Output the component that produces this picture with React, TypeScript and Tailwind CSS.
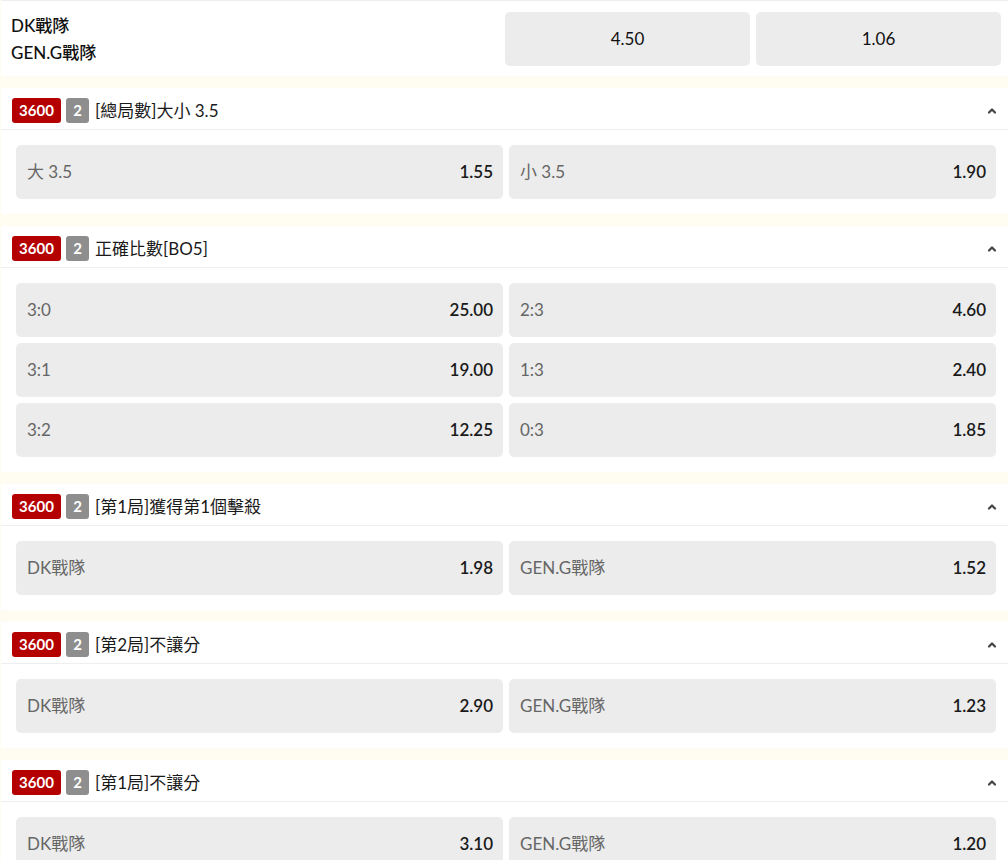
import { ChevronUp } from "lucide-react";

type Opt = { label: string; odds: string };
type Market = { title: string; opts: Opt[] };

const MARKETS: Market[] = [
  { title: "[總局數]大小 3.5", opts: [{ label: "大 3.5", odds: "1.55" }, { label: "小 3.5", odds: "1.90" }] },
  {
    title: "正確比數[BO5]",
    opts: [
      { label: "3:0", odds: "25.00" },
      { label: "2:3", odds: "4.60" },
      { label: "3:1", odds: "19.00" },
      { label: "1:3", odds: "2.40" },
      { label: "3:2", odds: "12.25" },
      { label: "0:3", odds: "1.85" },
    ],
  },
  { title: "[第1局]獲得第1個擊殺", opts: [{ label: "DK戰隊", odds: "1.98" }, { label: "GEN.G戰隊", odds: "1.52" }] },
  { title: "[第2局]不讓分", opts: [{ label: "DK戰隊", odds: "2.90" }, { label: "GEN.G戰隊", odds: "1.23" }] },
  { title: "[第1局]不讓分", opts: [{ label: "DK戰隊", odds: "3.10" }, { label: "GEN.G戰隊", odds: "1.20" }] },
];

function MarketCard({ m }: { m: Market }) {
  return (
    <section className="bg-white">
      <header className="flex h-[42px] items-center border-b border-[#eeeeee] pl-[11px] pr-[10px] pt-[4px]">
        <span className="flex h-[25px] w-[49px] items-center justify-center rounded-[3px] bg-[#b50000] text-[15px] font-bold text-white">
          3600
        </span>
        <span className="ml-[5px] flex h-[25px] w-[23px] items-center justify-center rounded-[3px] bg-[#8e8e8e] text-[15px] font-bold text-white">
          2
        </span>
        <span className="ml-[6px] text-[17px] text-[#1a1a1a]">{m.title}</span>
        <ChevronUp className="ml-auto h-[12px] w-[12px] text-[#444]" strokeWidth={4.5} />
      </header>
      <div className="grid grid-cols-2 gap-[6px] pb-[15px] pl-[15px] pr-[12px] pt-[15px]">
        {m.opts.map((o, i) => (
          <div
            key={i}
            className="flex h-[54px] items-center justify-between rounded-[5px] bg-[#ececec] pl-[11px] pr-[10px] text-[17px]"
          >
            <span className="text-[#666]">{o.label}</span>
            <span className="font-semibold text-[#1a1a1a]">{o.odds}</span>
          </div>
        ))}
      </div>
    </section>
  );
}

export default function App() {
  return (
    <div
      className="flex min-h-[860px] flex-col gap-[12px] bg-[#fffcf2] pl-px"
      style={{ fontFamily: 'Lato, "Noto Sans CJK TC", sans-serif' }}
    >
      <div className="flex items-center border-t border-[#eeeeee] bg-white pb-[10px] pl-[10px] pr-[7px] pt-[11px]">
        <div className="flex-1 text-[17px] font-medium leading-[27px] text-[#111]">
          <div>DK戰隊</div>
          <div>GEN.G戰隊</div>
        </div>
        <div className="flex gap-[6px]">
          <div className="flex h-[54px] w-[245px] items-center justify-center rounded-[5px] bg-[#ececec] text-[17px] text-[#111]">
            4.50
          </div>
          <div className="flex h-[54px] w-[245px] items-center justify-center rounded-[5px] bg-[#ececec] text-[17px] text-[#111]">
            1.06
          </div>
        </div>
      </div>
      {MARKETS.map((m, i) => (
        <MarketCard key={i} m={m} />
      ))}
    </div>
  );
}
